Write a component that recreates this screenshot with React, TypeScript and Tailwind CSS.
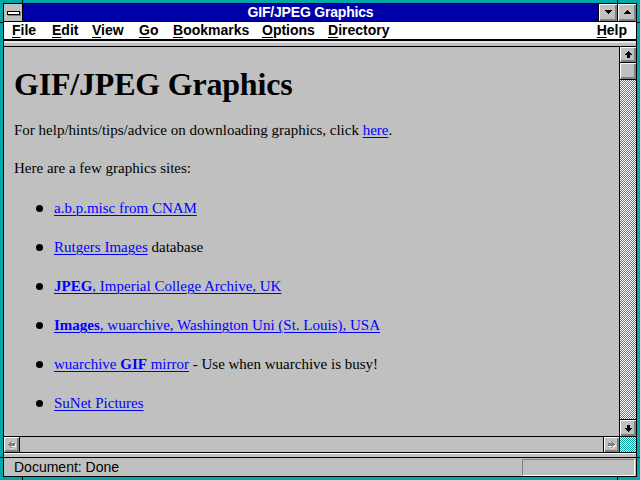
import type { ReactNode } from 'react';

const serif = "font-['Liberation_Serif','Times_New_Roman',serif]";
const sans = "font-['Liberation_Sans',Arial,sans-serif]";

// bevelled Win 3.1 button face
const bevel =
  'bg-[#c0c0c0] shadow-[inset_1px_1px_0_#ffffff,inset_-1px_-1px_0_#808080,inset_-2px_-2px_0_#808080]';

type Px = [number, number, number];

function Pixels({ rows, fill, size = 15 }: { rows: Px[]; fill: string; size?: number }) {
  return (
    <svg width={size} height={size} viewBox={`0 0 ${size} ${size}`} shapeRendering="crispEdges">
      {rows.map(([x, y, w], i) => (
        <rect key={i} x={x} y={y} width={w} height={1} fill={fill} />
      ))}
    </svg>
  );
}

// dithered scrollbar track
function Checker({ id, className }: { id: string; className: string }) {
  return (
    <div className={`relative bg-[#00a8a8] ${className}`}>
      <svg className="absolute inset-0 w-full h-full" shapeRendering="crispEdges">
        <defs>
          <pattern id={id} width="2" height="2" patternUnits="userSpaceOnUse">
            <rect x="0" y="0" width="1" height="1" fill="#ffffff" />
            <rect x="1" y="1" width="1" height="1" fill="#ffffff" />
          </pattern>
        </defs>
        <rect width="100%" height="100%" fill={`url(#${id})`} />
      </svg>
    </div>
  );
}

const upArrow: Px[] = [
  [7, 4, 1],
  [6, 5, 3],
  [5, 6, 5],
  [4, 7, 7],
  [6, 8, 3],
  [6, 9, 3],
  [6, 10, 3],
];
const downArrow: Px[] = [
  [6, 4, 3],
  [6, 5, 3],
  [6, 6, 3],
  [4, 7, 7],
  [5, 8, 5],
  [6, 9, 3],
  [7, 10, 1],
];

const toLeft: Px[] = [
  [4, 7, 1],
  [5, 6, 1],
  [5, 7, 1],
  [5, 8, 1],
  [6, 5, 1],
  [6, 6, 5],
  [6, 7, 5],
  [6, 8, 5],
  [6, 9, 1],
  [7, 4, 1],
  [7, 10, 1],
];
const toRight: Px[] = toLeft.map(([x, y, w]) => [14 - x - w + 1, y, w]);

function HArrow({ rows }: { rows: Px[] }) {
  return (
    <div className="relative w-[15px] h-[15px]">
      <div className="absolute left-[1px] top-[1px]">
        <Pixels rows={rows} fill="#ffffff" />
      </div>
      <div className="absolute left-0 top-0">
        <Pixels rows={rows} fill="#808080" />
      </div>
    </div>
  );
}

const titleDown: Px[] = [
  [5, 6, 7],
  [6, 7, 5],
  [7, 8, 3],
  [8, 9, 1],
];
const titleUp: Px[] = [
  [8, 6, 1],
  [7, 7, 3],
  [6, 8, 5],
  [5, 9, 7],
];

function Menu({ label, w }: { label: string; w?: string }) {
  return (
    <span className={`${w ?? ''} shrink-0`}>
      <span className="underline underline-offset-[2px] decoration-1">{label[0]}</span>
      {label.slice(1)}
    </span>
  );
}

function Item({ children }: { children: ReactNode }) {
  return (
    <li className="flex items-center h-[18px] leading-[18px]">
      <span className="w-[7px] h-[7px] rounded-full bg-black shrink-0" />
      <span className="ml-[11px] whitespace-nowrap">{children}</span>
    </li>
  );
}

function A({ children }: { children: ReactNode }) {
  return <a className="text-[#0000ff] underline decoration-1 underline-offset-[2px]">{children}</a>;
}

export default function App() {
  return (
    <div className="relative w-[640px] h-[480px] bg-[#00a8a8] p-[3px]">
      {/* frame corner marks */}
      <div className="absolute left-[22px] top-0 w-px h-[3px] bg-black" />
      <div className="absolute left-[617px] top-0 w-px h-[3px] bg-black" />
      <div className="absolute left-[22px] bottom-0 w-px h-[3px] bg-black" />
      <div className="absolute left-[617px] bottom-0 w-px h-[3px] bg-black" />
      <div className="absolute left-0 top-[22px] w-[3px] h-px bg-black" />
      <div className="absolute right-0 top-[22px] w-[3px] h-px bg-black" />
      <div className="absolute left-0 top-[457px] w-[3px] h-px bg-black" />
      <div className="absolute right-0 top-[457px] w-[3px] h-px bg-black" />

      <div className="w-full h-full border border-black bg-[#c0c0c0] flex flex-col">
        {/* title bar */}
        <div className="h-[18px] flex border-b border-black shrink-0">
          <div className="w-[19px] border-r border-black bg-[#c0c0c0] flex items-center justify-center">
            <div className="w-[13px] h-[4px] bg-white border border-black shadow-[1px_1px_0_#808080]" />
          </div>
          <div
            className={`flex-1 bg-[#0000a8] text-white font-bold text-[14px] leading-[17px] text-center tracking-[-0.2px] ${sans}`}
          >
            GIF/JPEG Graphics
          </div>
          <div className={`w-[19px] border-l border-black flex items-center justify-center ${bevel}`}>
            <Pixels rows={titleDown} fill="#000000" size={17} />
          </div>
          <div className={`w-[19px] border-l border-black flex items-center justify-center ${bevel}`}>
            <Pixels rows={titleUp} fill="#000000" size={17} />
          </div>
        </div>

        {/* menu bar */}
        <div
          className={`h-[19px] bg-white border-b-2 border-black flex items-center pl-[8px] pr-[9px] text-[14px] font-bold leading-[17px] text-black shrink-0 ${sans}`}
        >
          <Menu label="File" w="w-[40px]" />
          <Menu label="Edit" w="w-[40px]" />
          <Menu label="View" w="w-[47px]" />
          <Menu label="Go" w="w-[34px]" />
          <Menu label="Bookmarks" w="w-[89px]" />
          <Menu label="Options" w="w-[66px]" />
          <Menu label="Directory" />
          <span className="ml-auto">
            <Menu label="Help" />
          </span>
        </div>

        {/* thin strip */}
        <div className="h-[6px] bg-[#c0c0c0] border-t-2 border-t-[#e8e8e8] border-b border-black shrink-0" />

        {/* document + scrollbars */}
        <div className="h-[405px] flex shrink-0">
          <div className="flex-1 flex flex-col min-w-0">
            <div className={`flex-1 overflow-hidden px-[10px] pt-[19px] text-[15px] text-black ${serif}`}>
              <h1 className="text-[32px] font-bold leading-[37px] tracking-[-0.2px]">GIF/JPEG Graphics</h1>
              <p className="mt-[18px] leading-[18px]">
                For help/hints/tips/advice on downloading graphics, click <A>here</A>.
              </p>
              <p className="mt-[20px] leading-[18px]">Here are a few graphics sites:</p>
              <ul className="mt-[22px] ml-[22px] flex flex-col gap-[21px]">
                <Item>
                  <A>a.b.p.misc from CNAM</A>
                </Item>
                <Item>
                  <A>Rutgers Images</A> database
                </Item>
                <Item>
                  <A>
                    <b>JPEG</b>, Imperial College Archive, UK
                  </A>
                </Item>
                <Item>
                  <A>
                    <b>Images</b>, wuarchive, Washington Uni (St. Louis), USA
                  </A>
                </Item>
                <Item>
                  <A>
                    wuarchive <b>GIF</b> mirror
                  </A>{' '}
                  - Use when wuarchive is busy!
                </Item>
                <Item>
                  <A>SuNet Pictures</A>
                </Item>
              </ul>
            </div>

            {/* horizontal scrollbar */}
            <div className="h-[16px] border-t border-black flex shrink-0">
              <div className={`w-[16px] border-r border-black flex items-center justify-center ${bevel}`}>
                <HArrow rows={toLeft} />
              </div>
              <div className="flex-1 bg-[#c0c0c0]" />
              <div className={`w-[16px] border-l border-black flex items-center justify-center ${bevel}`}>
                <HArrow rows={toRight} />
              </div>
            </div>
          </div>

          {/* vertical scrollbar */}
          <div className="w-[17px] border-l border-black flex flex-col shrink-0">
            <div className={`h-[16px] border-b border-black flex items-center justify-center ${bevel}`}>
              <Pixels rows={upArrow} fill="#000000" />
            </div>
            <div className={`h-[17px] border-b border-black ${bevel}`} />
            <Checker id="trackA" className="flex-1" />
            <div className={`h-[18px] border-y border-black flex items-center justify-center ${bevel}`}>
              <Pixels rows={downArrow} fill="#000000" />
            </div>
            <Checker id="trackB" className="h-[15px] shrink-0" />
          </div>
        </div>

        {/* strip above status */}
        <div className="h-[6px] border-y border-black bg-[#c0c0c0] shadow-[inset_0_1px_0_#ffffff] shrink-0" />

        {/* status bar */}
        <div className={`h-[18px] flex items-start pt-[1px] shrink-0 ${sans}`}>
          <span className="pl-[10px] text-[14px] leading-[16px] text-black">Document: Done</span>
          <div className="ml-auto mr-[1px] w-[113px] h-[17px] border-t border-l border-[#808080] border-b border-r border-b-white border-r-white" />
        </div>
      </div>
    </div>
  );
}
